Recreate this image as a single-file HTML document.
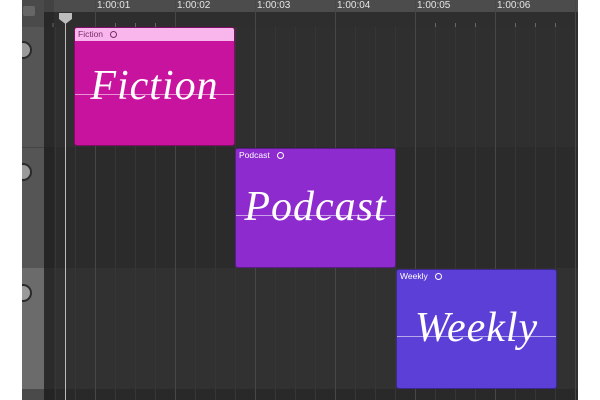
<!DOCTYPE html><html><head><style>
*{margin:0;padding:0;box-sizing:border-box}
body{width:600px;height:400px;background:#fff;position:relative;overflow:hidden;font-family:"Liberation Sans",sans-serif}
.a{position:absolute}
.clip{position:absolute;border-radius:3px;overflow:hidden;border:1px solid rgba(0,0,0,.35)}
.clip .h{height:13px;font-size:8.5px;line-height:13px;padding-left:3px;color:#fff}
.clip .h i{display:inline-block;width:7px;height:7px;border:1px solid currentColor;border-radius:50%;margin-left:7px;vertical-align:-1px}
.clip .ln{position:absolute;left:0;right:0;height:1px;background:rgba(255,255,255,.55);top:66px}
.clip .t{position:absolute;left:0;right:0;text-align:center;top:34px;font-family:"Liberation Serif",serif;font-style:italic;font-size:42px;color:#fff;letter-spacing:1px}
.knob{position:absolute;left:14px;width:18px;height:18px;border-radius:50%;background:#9a9a9a;border:2.5px solid #2a2a2a}
</style></head><body>
<div class="a" style="left:22px;top:0;width:22px;height:400px;background:#555"></div>
<div class="a" style="left:22px;top:0;width:22px;height:27px;background:#4a4a4a"></div>
<div class="a" style="left:23px;top:6px;width:12px;height:10px;background:#666;border-radius:2px"></div>
<div class="a" style="left:22px;top:147px;width:22px;height:1px;background:#444"></div>
<div class="a" style="left:22px;top:268px;width:22px;height:121px;background:#6b6b6b"></div>
<div class="a" style="left:22px;top:389px;width:22px;height:11px;background:#4a4a4a"></div>
<div class="knob" style="top:41px"></div>
<div class="knob" style="top:163px"></div>
<div class="knob" style="top:284px"></div>
<div class="a" style="left:0;top:0;width:22px;height:400px;background:#fff"></div>
<div class="a" style="left:44px;top:0;width:534px;height:12px;background:#4c4c4c"></div>
<div class="a" style="left:44px;top:12px;width:534px;height:15px;background:#2e2e2e"></div>
<div class="a" style="left:44px;top:27px;width:534px;height:120px;background:#2f2f2f"></div>
<div class="a" style="left:44px;top:147px;width:534px;height:121px;background:#2b2b2b"></div>
<div class="a" style="left:44px;top:268px;width:534px;height:121px;background:#313131"></div>
<div class="a" style="left:44px;top:389px;width:534px;height:11px;background:#292929"></div>
<div class="a" style="left:44px;top:0;width:10px;height:400px;background:rgba(0,0,0,.12)"></div>
<svg class="a" style="left:0;top:0" width="600" height="400">
<g stroke="#363636" stroke-width="1">
<line x1="55.5" y1="27" x2="55.5" y2="400"/><line x1="75.5" y1="27" x2="75.5" y2="400"/>
<line x1="115.5" y1="27" x2="115.5" y2="400"/><line x1="135.5" y1="27" x2="135.5" y2="400"/><line x1="155.5" y1="27" x2="155.5" y2="400"/>
<line x1="195.5" y1="27" x2="195.5" y2="400"/><line x1="215.5" y1="27" x2="215.5" y2="400"/><line x1="235.5" y1="27" x2="235.5" y2="400"/>
<line x1="275.5" y1="27" x2="275.5" y2="400"/><line x1="295.5" y1="27" x2="295.5" y2="400"/><line x1="315.5" y1="27" x2="315.5" y2="400"/>
<line x1="355.5" y1="27" x2="355.5" y2="400"/><line x1="375.5" y1="27" x2="375.5" y2="400"/><line x1="395.5" y1="27" x2="395.5" y2="400"/>
<line x1="435.5" y1="27" x2="435.5" y2="400"/><line x1="455.5" y1="27" x2="455.5" y2="400"/><line x1="475.5" y1="27" x2="475.5" y2="400"/>
<line x1="515.5" y1="27" x2="515.5" y2="400"/><line x1="535.5" y1="27" x2="535.5" y2="400"/><line x1="555.5" y1="27" x2="555.5" y2="400"/>
</g>
<g stroke="#474747"><line x1="95.5" y1="0" x2="95.5" y2="400"/><line x1="175.5" y1="0" x2="175.5" y2="400"/><line x1="255.5" y1="0" x2="255.5" y2="400"/><line x1="335.5" y1="0" x2="335.5" y2="400"/><line x1="415.5" y1="0" x2="415.5" y2="400"/><line x1="495.5" y1="0" x2="495.5" y2="400"/><line x1="575.5" y1="0" x2="575.5" y2="400"/></g>
<g stroke="#666"><line x1="53" y1="23" x2="53" y2="27"/><line x1="115.5" y1="23" x2="115.5" y2="27"/><line x1="135.5" y1="23" x2="135.5" y2="27"/><line x1="155.5" y1="23" x2="155.5" y2="27"/><line x1="435.5" y1="23" x2="435.5" y2="27"/><line x1="455.5" y1="23" x2="455.5" y2="27"/><line x1="475.5" y1="23" x2="475.5" y2="27"/><line x1="515.5" y1="23" x2="515.5" y2="27"/><line x1="535.5" y1="23" x2="535.5" y2="27"/><line x1="555.5" y1="23" x2="555.5" y2="27"/></g>
<g fill="#e6e6e6" font-size="10" font-family="Liberation Sans"><text x="97" y="8">1:00:01</text><text x="177" y="8">1:00:02</text><text x="257" y="8">1:00:03</text><text x="337" y="8">1:00:04</text><text x="417" y="8">1:00:05</text><text x="497" y="8">1:00:06</text></g>
<line x1="65.5" y1="14" x2="65.5" y2="400" stroke="#bbb"/>
<path d="M59 13h13v6l-6.5 5-6.5-5z" fill="#bdbdbd"/>
</svg>
<div class="a" style="left:578px;top:0;width:22px;height:400px;background:#fff"></div>
<div class="clip" style="left:74px;top:27px;width:161px;height:119px;background:#c8139f">
<div class="h" style="background:#f8b6ec;color:#7a2a6a">Fiction<i></i></div><div class="ln"></div><div class="t">Fiction</div></div>
<div class="clip" style="left:235px;top:148px;width:161px;height:120px;background:#8e2bcf">
<div class="h">Podcast<i></i></div><div class="ln"></div><div class="t">Podcast</div></div>
<div class="clip" style="left:396px;top:269px;width:161px;height:120px;background:#5c3fd6">
<div class="h">Weekly<i></i></div><div class="ln"></div><div class="t">Weekly</div></div>
</body></html>
